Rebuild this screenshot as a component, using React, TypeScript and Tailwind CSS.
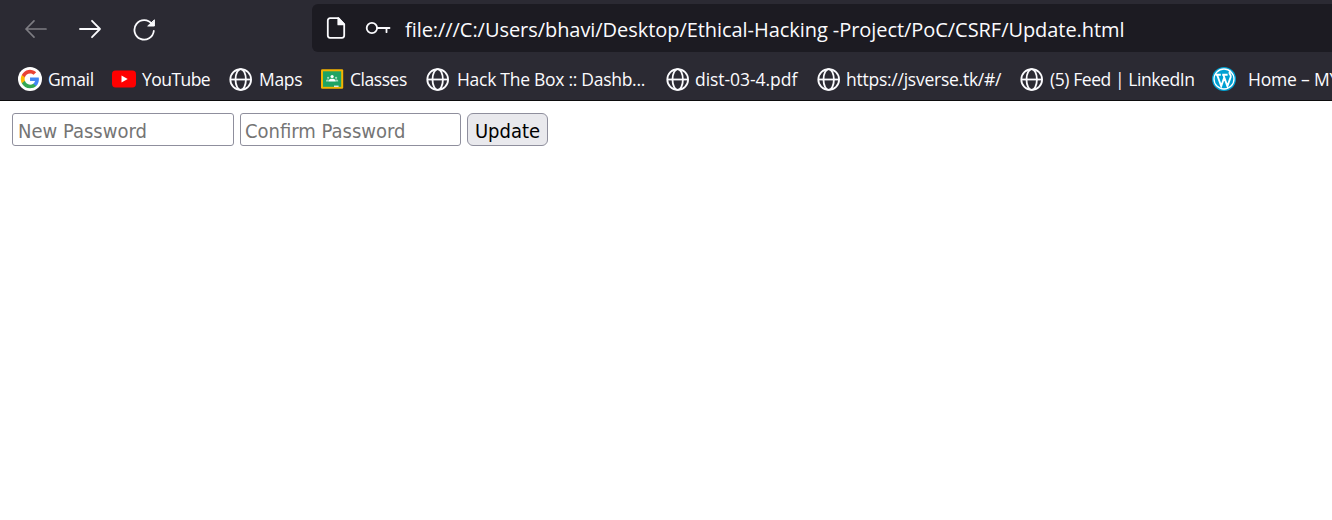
import type { ReactNode } from "react";

function Globe() {
  return (
    <svg className="block size-6" viewBox="0 0 24 24" fill="none" stroke="#fbfbfe" strokeWidth="1.8">
      <circle cx="11.7" cy="12.5" r="10.4" />
      <ellipse cx="11.7" cy="12.5" rx="5.2" ry="10.4" />
      <path d="M1.3 12.5h20.8" />
    </svg>
  );
}

function Google() {
  return (
    <svg className="block size-6" viewBox="0 0 24 24">
      <circle cx="12" cy="12" r="12" fill="#fff" />
      <g transform="translate(2.8 2.8) scale(.77)">
        <path fill="#4285f4" d="M23.5 12.3c0-.8-.1-1.6-.2-2.3H12v4.5h6.5a5.6 5.6 0 0 1-2.4 3.6v3h3.9c2.2-2.1 3.5-5.1 3.5-8.8z" />
        <path fill="#34a853" d="M12 24c3.2 0 6-1.1 8-2.9l-3.9-3c-1.1.7-2.5 1.2-4.1 1.2-3.1 0-5.8-2.1-6.7-5H1.3v3.1A12 12 0 0 0 12 24z" />
        <path fill="#fbbc05" d="M5.3 14.3a7.2 7.2 0 0 1 0-4.6V6.6h-4a12 12 0 0 0 0 10.8z" />
        <path fill="#ea4335" d="M12 4.7c1.8 0 3.4.6 4.6 1.8L20 3.1A12 12 0 0 0 1.3 6.6l4 3.1c.9-2.9 3.6-5 6.7-5z" />
      </g>
    </svg>
  );
}

function YouTube() {
  return (
    <svg className="block size-6" viewBox="0 0 24 24">
      <rect y="3.6" width="24" height="16.8" rx="3.6" fill="#f00" />
      <path d="M9.5 8.5v7l6.2-3.5z" fill="#fff" />
    </svg>
  );
}

function Classroom() {
  return (
    <svg className="block size-6" viewBox="0 0 24 24">
      <rect x="0" y="2.3" width="22.2" height="19.5" rx="1.2" fill="#f4b400" />
      <rect x="2" y="4.3" width="18.2" height="15.5" fill="#1fa463" />
      <circle cx="11.1" cy="9.5" r="1.6" fill="#fff" />
      <circle cx="7.1" cy="10.8" r="1.1" fill="#a5dabf" />
      <circle cx="15.1" cy="10.8" r="1.1" fill="#a5dabf" />
      <path d="M5 14.5v-.7c0-1 1.3-1.5 2.7-1.3v2zM17.2 14.5v-.7c0-1-1.3-1.5-2.7-1.3v2z" fill="#a5dabf" />
      <path d="M7.6 14.5v-.6c0-1.5 1.8-2.1 3.5-2.1s3.5.6 3.5 2.1v.6z" fill="#fff" />
      <path d="M13 18.6h4.6v1.3H13z" fill="#f1f1f1" />
    </svg>
  );
}

function WordPress() {
  return (
    <svg className="block size-6" viewBox="0 0 24 24">
      <circle cx="12" cy="12" r="12" fill="#00a0d2" />
      <circle cx="12" cy="12" r="10" fill="none" stroke="#fff" strokeWidth="1.3" />
      <path
        d="M3.6 7.8h5.2M10.2 7.8h5.4M5.2 8l4 11.2L12.4 10M11.4 8l4 11.2L18.7 10c.4-1.5-.6-2.4-1.1-3.5-.4-1 .2-1.9 1.1-2"
        fill="none"
        stroke="#fff"
        strokeWidth="1.9"
      />
    </svg>
  );
}

const bookmarks: { icon: ReactNode; label: string; width: string; text: string }[] = [
  { icon: <Google />, label: "Gmail", width: "w-[94px]", text: "ml-[6px] tracking-[-0.35px]" },
  { icon: <YouTube />, label: "YouTube", width: "w-[117px]", text: "ml-[6px] tracking-[-0.55px]" },
  { icon: <Globe />, label: "Maps", width: "w-[92px]", text: "ml-[6px] tracking-[-0.3px]" },
  { icon: <Classroom />, label: "Classes", width: "w-[105px]", text: "ml-[5px] tracking-[-0.45px]" },
  { icon: <Globe />, label: "Hack The Box :: Dashb...", width: "w-[240px]", text: "ml-[7px] tracking-[-0.28px]" },
  { icon: <Globe />, label: "dist-03-4.pdf", width: "w-[151px]", text: "ml-[5px] tracking-[-0.05px]" },
  { icon: <Globe />, label: "https://jsverse.tk/#/", width: "w-[203px]", text: "ml-[5px] tracking-[-0.25px]" },
  { icon: <Globe />, label: "(5) Feed | LinkedIn", width: "w-[192px]", text: "ml-[6px] tracking-[-0.43px]" },
  { icon: <WordPress />, label: "Home – MY", width: "w-[130px]", text: "ml-[12px] tracking-[-0.2px]" },
];

export default function App() {
  return (
    <div className="h-[520px] w-full overflow-hidden bg-white">
      <header className="h-[101px] overflow-hidden border-b border-[#0c0c0d] bg-[#2b2a33] font-['Open_Sans',sans-serif] text-[#fbfbfe]">
        <div className="flex pt-1">
          <nav className="flex h-12 w-[312px] shrink-0 items-center gap-[30px] pl-6 pt-[2px]">
            <button aria-label="Back" className="text-[#7d7c82]">
              <svg className="block size-6" viewBox="0 0 24 24" fill="none" stroke="currentColor" strokeWidth="1.7" strokeLinecap="round" strokeLinejoin="round">
                <path d="M22 12H2M10 3.8L2 12l8 8.2" />
              </svg>
            </button>
            <button aria-label="Forward">
              <svg className="block size-6" viewBox="0 0 24 24" fill="none" stroke="currentColor" strokeWidth="1.8" strokeLinecap="round" strokeLinejoin="round">
                <path d="M2 12h20M14 3.8l8 8.2-8 8.2" />
              </svg>
            </button>
            <button aria-label="Reload">
              <svg className="block size-6" viewBox="0 0 24 24" fill="none" stroke="currentColor" strokeWidth="1.8" strokeLinecap="round">
                <path d="M20 7.2A9.7 9.7 0 1 0 21.8 14" />
                <path d="M22.4 3.2v5.8h-6.3z" fill="currentColor" strokeWidth="1" strokeLinejoin="round" />
              </svg>
            </button>
          </nav>
          <div className="flex h-12 grow items-center rounded-l-md bg-[#1c1b22] pl-3">
            <svg className="size-6 shrink-0" viewBox="0 0 24 24" fill="none" stroke="currentColor" strokeWidth="1.8" strokeLinejoin="round">
              <path d="M14.3 2.2H6a2.2 2.2 0 0 0-2.2 2.2v15.2A2.2 2.2 0 0 0 6 21.8h12a2.2 2.2 0 0 0 2.2-2.2V8.4z" />
              <path d="M14.3 2.2v6.2h5.9z" fill="currentColor" />
            </svg>
            <svg className="ml-[17px] h-6 w-[26px] shrink-0" viewBox="0 0 26 24" fill="none" stroke="currentColor" strokeWidth="1.8" strokeLinecap="round">
              <circle cx="6.9" cy="12" r="5.2" />
              <path d="M12.2 12h12.3M21.5 12v4.2" />
            </svg>
            <span className="ml-[14px] whitespace-pre pt-[3px] text-[20px] leading-6 tracking-[-0.055px]">
              file:///C:/Users/bhavi/Desktop/Ethical-Hacking -Project/PoC/CSRF/Update.html
            </span>
          </div>
        </div>
        <div className="flex h-12 items-center pl-[18px] pt-[6px]">
          {bookmarks.map((b) => (
            <div key={b.label} className={`flex shrink-0 items-center ${b.width}`}>
              {b.icon}
              <span className={`whitespace-pre text-[17.5px] leading-6 ${b.text}`}>{b.label}</span>
            </div>
          ))}
        </div>
      </header>
      <form className="flex gap-[6px] pl-3 pt-3 font-['DejaVu_Sans_Condensed','DejaVu_Sans',sans-serif] text-[20px]" onSubmit={(e) => e.preventDefault()}>
        <input
          type="password"
          placeholder="New Password"
          className="h-[33px] w-[222px] rounded-[3px] border border-[#8f8f9d] px-[5px] pt-[2px] placeholder:text-[#757575]"
        />
        <input
          type="password"
          placeholder="Confirm Password"
          className="h-[33px] w-[221px] rounded-[3px] border border-[#8f8f9d] px-1 pt-[2px] placeholder:text-[#757575]"
        />
        <button className="h-[33px] w-[81px] rounded-[6px] border border-[#8f8f9d] bg-[#e9e9ed] pt-[2px] leading-7 text-black">
          Update
        </button>
      </form>
    </div>
  );
}
